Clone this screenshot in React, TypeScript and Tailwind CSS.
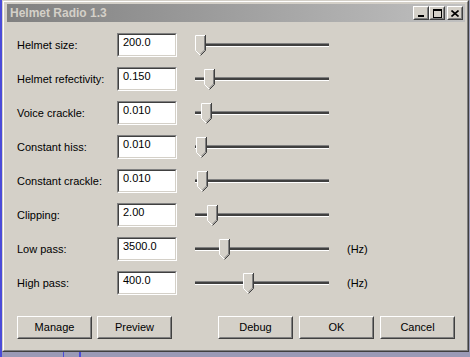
const rows = [
  { label: "Helmet size:", value: "200.0", pos: 0 },
  { label: "Helmet refectivity:", value: "0.150", pos: 9 },
  { label: "Voice crackle:", value: "0.010", pos: 6 },
  { label: "Constant hiss:", value: "0.010", pos: 1 },
  { label: "Constant crackle:", value: "0.010", pos: 2 },
  { label: "Clipping:", value: "2.00", pos: 12 },
  { label: "Low pass:", value: "3500.0", pos: 24, unit: "(Hz)" },
  { label: "High pass:", value: "400.0", pos: 48, unit: "(Hz)" },
];

function Thumb() {
  return (
    <svg width="11" height="21" viewBox="0 0 11 21">
      <polygon points="0,0 11,0 11,15 5.5,20.5 0,15" fill="#d4d0c8" />
      <polyline points="0.5,15.5 0.5,0.5 10,0.5" fill="none" stroke="#ffffff" />
      <polyline points="0.5,15.5 5.5,20.5" fill="none" stroke="#ffffff" />
      <polyline points="10.5,0 10.5,15.5 5.5,20.5" fill="none" stroke="#404040" />
      <polyline points="9.5,1 9.5,15 5.5,19" fill="none" stroke="#808080" />
    </svg>
  );
}

function Slider({ pos }: { pos: number }) {
  return (
    <div className="relative w-[134px] h-[24px] pt-[10px]">
      <div className="h-[4px] border-t border-b border-t-[#808080] border-b-white bg-[#404040]" />
      <div className="absolute top-[2px]" style={{ left: pos }}>
        <Thumb />
      </div>
    </div>
  );
}

function Field({ value }: { value: string }) {
  return (
    <div className="w-[60px] h-[24px] border border-t-[#808080] border-l-[#808080] border-b-white border-r-white">
      <div className="h-full border border-t-[#404040] border-l-[#404040] border-b-[#d4d0c8] border-r-[#d4d0c8] bg-white pl-[4px] pt-[1px] text-[11px] leading-[13px] text-black">
        {value}
      </div>
    </div>
  );
}

function PushButton({ label, className }: { label: string; className?: string }) {
  return (
    <div
      className={
        "w-[75px] h-[23px] border border-t-white border-l-white border-b-[#404040] border-r-[#404040] " +
        (className ?? "")
      }
    >
      <div className="h-full flex items-center justify-center border border-t-[#d4d0c8] border-l-[#d4d0c8] border-b-[#808080] border-r-[#808080] text-[11px] text-black">
        {label}
      </div>
    </div>
  );
}

function CaptionButton({ children, className }: { children: React.ReactNode; className?: string }) {
  return (
    <div
      className={
        "w-[16px] h-[14px] bg-[#d4d0c8] border border-t-white border-l-white border-b-[#404040] border-r-[#404040] " +
        (className ?? "")
      }
    >
      <div className="h-full flex items-center justify-center border border-t-[#d4d0c8] border-l-[#d4d0c8] border-b-[#808080] border-r-[#808080]">
        {children}
      </div>
    </div>
  );
}

export default function App() {
  return (
    <div className="w-[470px] h-[357px] flex flex-col bg-[#9a9ab6] font-['Liberation_Sans',Arial,sans-serif] overflow-hidden">
      <div className="flex h-[352px]">
        <div className="w-[2px] bg-[#4b4bd8]" />
        {/* window frame */}
        <div className="w-[467px] h-[352px] border border-t-[#d4d0c8] border-l-[#d4d0c8] border-b-[#404040] border-r-[#404040]">
          <div className="h-full flex flex-col bg-[#d4d0c8] border border-t-white border-l-white border-b-[#808080] border-r-[#808080] pl-[3px] pr-[2px] pt-[2px]">
            {/* title bar */}
            <div className="h-[18px] flex items-center bg-gradient-to-r from-[#808080] to-[#c0c0c0] pl-[3px] pr-[2px]">
              <span className="text-[12px] font-bold text-[#d4d0c8] leading-none">Helmet Radio 1.3</span>
              <div className="ml-auto flex items-center">
                <CaptionButton>
                  <svg width="8" height="8" viewBox="0 0 8 8">
                    <rect x="1" y="6" width="6" height="2" fill="#000" />
                  </svg>
                </CaptionButton>
                <CaptionButton>
                  <svg width="9" height="9" viewBox="0 0 9 9">
                    <rect x="0.5" y="0.5" width="8" height="8" fill="none" stroke="#000" />
                    <rect x="0" y="0" width="9" height="2" fill="#000" />
                  </svg>
                </CaptionButton>
                <CaptionButton className="ml-[2px]">
                  <svg width="8" height="7" viewBox="0 0 8 7">
                    <path d="M0.5 0.5 L7.5 6.5 M7.5 0.5 L0.5 6.5" stroke="#000" strokeWidth="1.6" />
                  </svg>
                </CaptionButton>
              </div>
            </div>

            {/* parameter rows */}
            <div className="mt-[11px] pl-[10px] flex flex-col gap-[10px]">
              {rows.map((r) => (
                <div key={r.label} className="h-[24px] flex items-center">
                  <div className="w-[100px] text-[11px] text-black">{r.label}</div>
                  <Field value={r.value} />
                  <div className="ml-[18px]">
                    <Slider pos={r.pos} />
                  </div>
                  {r.unit && <div className="ml-[18px] text-[11px] text-black">{r.unit}</div>}
                </div>
              ))}
            </div>

            {/* buttons */}
            <div className="mt-[21px] pl-[10px] flex">
              <PushButton label="Manage" />
              <PushButton label="Preview" className="ml-[5px]" />
              <PushButton label="Debug" className="ml-[46px]" />
              <PushButton label="OK" className="ml-[6px]" />
              <PushButton label="Cancel" className="ml-[6px]" />
            </div>
          </div>
        </div>
      </div>
      <div className="flex h-[5px]">
        <div className="w-[2px] bg-[#4b4bd8]" />
        <div className="ml-[61px] w-[1px] bg-[#4b4bd8]" />
        <div className="ml-[15px] w-[2px] bg-[#4b4bd8]" />
      </div>
    </div>
  );
}
